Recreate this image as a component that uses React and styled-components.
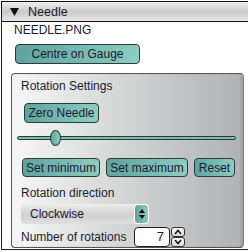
import React from 'react';
import styled, { createGlobalStyle } from 'styled-components';

const GlobalStyle = createGlobalStyle`
  body {
    margin: 0;
    font-family: "Liberation Sans", Arial, sans-serif;
    font-size: 12px;
    color: #1b1b30;
    background: #fff;
  }
`;

const Page = styled.div`
  padding: 1px 0 0 1px;
`;

const Frame = styled.div`
  width: 247px;
  height: 249px;
  box-sizing: border-box;
  border-left: 1px solid #222;
  border-bottom: 1px solid #222;
`;

const Header = styled.div`
  height: 21px;
  box-sizing: border-box;
  margin-left: -1px;
  border: 1px solid #111;
  border-right: none;
  background: linear-gradient(#f0f0f0, #c9c9c9 50%, #e6e6e6);
  display: flex;
  align-items: center;
  padding-left: 8px;
  gap: 9px;
  font-size: 12.5px;
`;

const Body = styled.div`
  padding: 1px 0 0 9px;
`;

const FileName = styled.div`
  line-height: 14px;
  margin-left: 3px;
`;

const Button = styled.button`
  font-family: inherit;
  font-size: 12px;
  color: #1b1b30;
  white-space: nowrap;
  height: ${(p) => p.h || 20}px;
  width: ${(p) => (p.w ? `${p.w}px` : 'auto')};
  padding: 0;
  box-sizing: border-box;
  border: 1px solid #2a3b38;
  border-radius: 4px;
  background: linear-gradient(to right, #5fa39c, #8ecdc1);
  display: flex;
  align-items: center;
  justify-content: center;
  flex-shrink: 0;
  margin-left: ${(p) => p.ml || 0}px;
  margin-top: ${(p) => p.mt || 0}px;
`;

const Panel = styled.div`
  margin-top: 9px;
  width: 233px;
  height: 175px;
  box-sizing: border-box;
  border: 1px solid #555;
  border-right-color: #888;
  border-radius: 4px;
  background: linear-gradient(to right, #f6f6f6, #d6d8d8 45%, #aeb2b2);
  box-shadow: inset -2px 0 2px rgba(0, 0, 0, 0.12);
  padding: 5px 0 0 9px;
`;

const Label = styled.div`
  line-height: 14px;
  white-space: nowrap;
  width: ${(p) => (p.w ? `${p.w}px` : 'auto')};
  margin-top: ${(p) => p.mt || 0}px;
`;

const SliderWrap = styled.div`
  position: relative;
  margin: 5px 0 0 -4px;
  width: 219px;
  height: 20px;
  display: flex;
  align-items: center;
`;

const Track = styled.div`
  width: 100%;
  height: 4px;
  box-sizing: border-box;
  border: 1px solid #2a3b38;
  border-radius: 2px;
  background: #78bbb1;
`;

const Thumb = styled.div`
  position: absolute;
  left: 33px;
  top: 2px;
  width: 11px;
  height: 16px;
  box-sizing: border-box;
  border: 1px solid #2a3b38;
  border-radius: 50%;
  background: linear-gradient(to right, #5fa39c, #8ecdc1);
`;

const Row = styled.div`
  display: flex;
  align-items: center;
  gap: ${(p) => p.gap || 0}px;
  margin-top: ${(p) => p.mt || 0}px;
  margin-left: ${(p) => p.ml || 0}px;
`;

const Select = styled.div`
  margin-top: 4px;
  width: 128px;
  height: 20px;
  box-sizing: border-box;
  border-radius: 4px;
  background: linear-gradient(#ededed, #cfcfcf 55%, #e0e0e0);
  display: flex;
  align-items: center;
`;

const SelectText = styled.span`
  flex: 1;
  padding-left: 9px;
`;

const ArrowBox = styled.div`
  width: 15px;
  height: 20px;
  box-sizing: border-box;
  border: 1.5px solid #fff;
  border-radius: 4px;
  background: linear-gradient(to right, #5fa39c, #8ecdc1);
  display: flex;
  align-items: center;
  justify-content: center;
`;

const NumberBox = styled.div`
  width: 36px;
  height: 20px;
  box-sizing: border-box;
  border: 1px solid #222;
  border-radius: 4px;
  background: #fff;
  text-align: right;
  padding-right: 5px;
  line-height: 18px;
  font-size: 13px;
`;

const Spinner = styled.div`
  display: flex;
  flex-direction: column;
  margin-left: 1px;
`;

const SpinBtn = styled.div`
  width: 14px;
  height: 10px;
  box-sizing: border-box;
  border: 1px solid #333;
  border-radius: 3px;
  background: linear-gradient(#fafafa, #d8d8d8);
  display: flex;
  align-items: center;
  justify-content: center;
`;

const Chevron = ({ up }) => (
  <svg width="8" height="6" viewBox="0 0 8 6">
    <path
      d={up ? 'M1 5 L4 1.5 L7 5' : 'M1 1 L4 4.5 L7 1'}
      fill="none"
      stroke="#111"
      strokeWidth="1.5"
    />
  </svg>
);

export default function App() {
  return (
    <Page>
      <GlobalStyle />
      <Frame>
        <Header>
          <svg width="9" height="8" viewBox="0 0 9 8">
            <polygon points="0,0 9,0 4.5,8" fill="#111" />
          </svg>
          <span>Needle</span>
        </Header>
        <Body>
          <FileName>NEEDLE.PNG</FileName>
          <Button w={125} mt={7} ml={4}>Centre on Gauge</Button>
          <Panel>
            <Label>Rotation Settings</Label>
            <Button w={75} mt={10} ml={3}>Zero Needle</Button>
            <SliderWrap>
              <Track />
              <Thumb />
            </SliderWrap>
            <Row mt={10} gap={6} ml={1}>
              <Button h={19} w={78}>Set minimum</Button>
              <Button h={19} w={82}>Set maximum</Button>
              <Button h={19} w={41}>Reset</Button>
            </Row>
            <Label mt={9}>Rotation direction</Label>
            <Select>
              <SelectText>Clockwise</SelectText>
              <ArrowBox>
                <svg width="6" height="10" viewBox="0 0 6 10">
                  <polygon points="0,4 6,4 3,0" fill="#111" />
                  <polygon points="0,6 6,6 3,10" fill="#111" />
                </svg>
              </ArrowBox>
            </Select>
            <Row mt={3}>
              <Label w={113}>Number of rotations</Label>
              <NumberBox>7</NumberBox>
              <Spinner>
                <SpinBtn><Chevron up /></SpinBtn>
                <SpinBtn><Chevron /></SpinBtn>
              </Spinner>
            </Row>
          </Panel>
        </Body>
      </Frame>
    </Page>
  );
}
